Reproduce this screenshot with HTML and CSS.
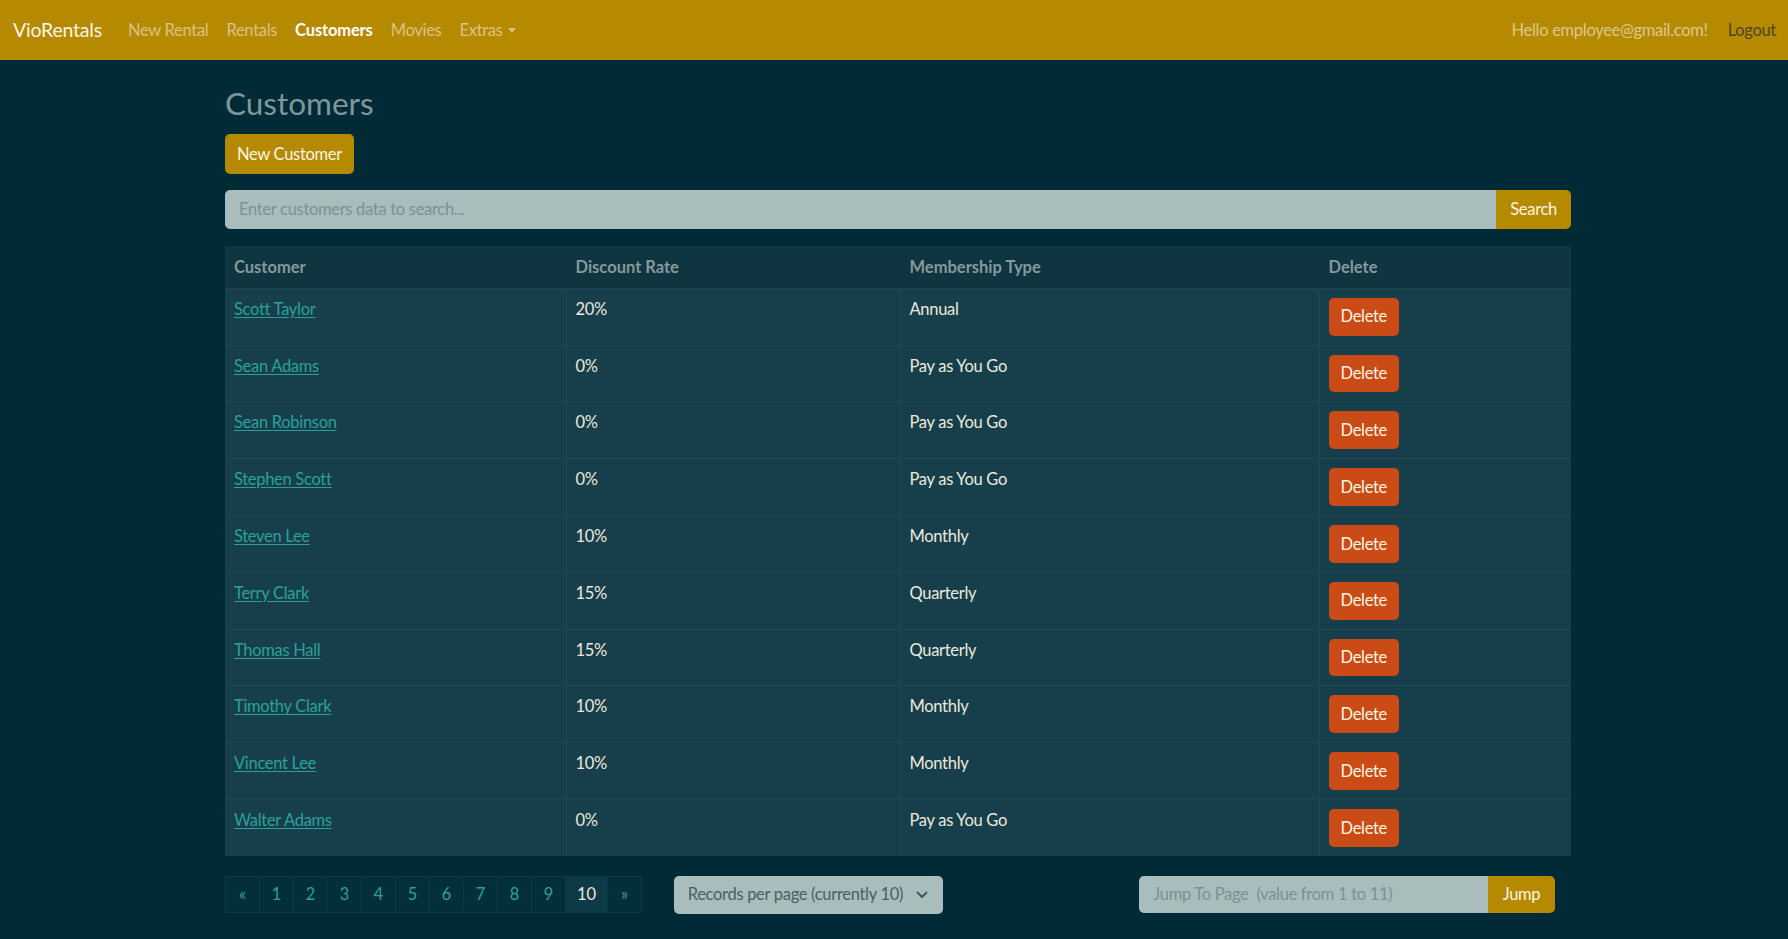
FILE: index.html
```html
<!DOCTYPE html>
<html lang="en">
<head>
<meta charset="utf-8">
<title>Customers - VioRentals</title>
<link rel="stylesheet" href="styles.css">
</head>
<body>
<nav class="navbar">
  <a class="brand" href="#">VioRentals</a>
  <ul class="nav">
    <li><a class="nav-link" href="#">New Rental</a></li>
    <li><a class="nav-link" href="#">Rentals</a></li>
    <li><a class="nav-link active" href="#">Customers</a></li>
    <li><a class="nav-link" href="#">Movies</a></li>
    <li><a class="nav-link dropdown" href="#">Extras<span class="caret"></span></a></li>
  </ul>
  <div class="nav-right">
    <span class="hello">Hello employee@gmail.com!</span>
    <a class="logout" href="#">Logout</a>
  </div>
</nav>

<main class="container">
  <h2 class="page-title">Customers</h2>
  <button class="btn btn-primary btn-new">New Customer</button>

  <form class="input-group search-group">
    <input class="form-input" type="text" placeholder="Enter customers data to search...">
    <button class="btn btn-primary btn-addon" type="button">Search</button>
  </form>

  <table class="table">
    <colgroup>
      <col class="col-customer">
      <col class="col-discount">
      <col class="col-membership">
      <col class="col-delete">
    </colgroup>
    <thead>
      <tr><th>Customer</th><th>Discount Rate</th><th>Membership Type</th><th>Delete</th></tr>
    </thead>
    <tbody>
      <tr><td><a href="#">Scott Taylor</a></td><td>20%</td><td>Annual</td><td><button class="btn btn-delete">Delete</button></td></tr>
      <tr><td><a href="#">Sean Adams</a></td><td>0%</td><td>Pay as You Go</td><td><button class="btn btn-delete">Delete</button></td></tr>
      <tr><td><a href="#">Sean Robinson</a></td><td>0%</td><td>Pay as You Go</td><td><button class="btn btn-delete">Delete</button></td></tr>
      <tr><td><a href="#">Stephen Scott</a></td><td>0%</td><td>Pay as You Go</td><td><button class="btn btn-delete">Delete</button></td></tr>
      <tr><td><a href="#">Steven Lee</a></td><td>10%</td><td>Monthly</td><td><button class="btn btn-delete">Delete</button></td></tr>
      <tr><td><a href="#">Terry Clark</a></td><td>15%</td><td>Quarterly</td><td><button class="btn btn-delete">Delete</button></td></tr>
      <tr><td><a href="#">Thomas Hall</a></td><td>15%</td><td>Quarterly</td><td><button class="btn btn-delete">Delete</button></td></tr>
      <tr><td><a href="#">Timothy Clark</a></td><td>10%</td><td>Monthly</td><td><button class="btn btn-delete">Delete</button></td></tr>
      <tr><td><a href="#">Vincent Lee</a></td><td>10%</td><td>Monthly</td><td><button class="btn btn-delete">Delete</button></td></tr>
      <tr><td><a href="#">Walter Adams</a></td><td>0%</td><td>Pay as You Go</td><td><button class="btn btn-delete">Delete</button></td></tr>
    </tbody>
  </table>

  <div class="footer-row">
    <ul class="pagination">
      <li><a class="page-link" href="#">&laquo;</a></li>
      <li><a class="page-link" href="#">1</a></li>
      <li><a class="page-link" href="#">2</a></li>
      <li><a class="page-link" href="#">3</a></li>
      <li><a class="page-link" href="#">4</a></li>
      <li><a class="page-link" href="#">5</a></li>
      <li><a class="page-link" href="#">6</a></li>
      <li><a class="page-link" href="#">7</a></li>
      <li><a class="page-link" href="#">8</a></li>
      <li><a class="page-link" href="#">9</a></li>
      <li><a class="page-link active" href="#">10</a></li>
      <li><a class="page-link" href="#">&raquo;</a></li>
    </ul>

    <div class="select-wrap">
      <div class="select">
        <span>Records per page (currently 10)</span>
        <svg class="chevron" width="12" height="8" viewBox="0 0 12 8"><path d="M1.5 1.5 L6 6 L10.5 1.5" fill="none" stroke="#3f5558" stroke-width="1.8" stroke-linecap="round" stroke-linejoin="round"/></svg>
      </div>
    </div>

    <form class="input-group jump-group">
      <input class="form-input" type="text" placeholder="Jump To Page  (value from 1 to 11)">
      <button class="btn btn-primary btn-addon btn-jump" type="button">Jump</button>
    </form>
  </div>
</main>
</body>
</html>
```

FILE: styles.css
```css
* { box-sizing: border-box; }

html, body {
  margin: 0;
  padding: 0;
}

body {
  background: #002b36;
  color: #839496;
  font-family: Lato, "Open Sans", "Liberation Sans", sans-serif;
  font-size: 16.5px;
  letter-spacing: -0.3px;
  line-height: 1.5;
  min-height: 939px;
}

a { text-decoration: none; }

/* ---------- navbar ---------- */
.navbar {
  height: 60px;
  background: #b58900;
  display: flex;
  align-items: center;
  padding: 0 12px 0 13px;
}

.brand {
  color: #fdf6e3;
  font-size: 19.5px;
  letter-spacing: -0.2px;
  margin-right: 17px;
  line-height: 1;
}

.nav {
  list-style: none;
  margin: 0;
  padding: 0;
  display: flex;
  align-items: center;
}

.nav-link {
  display: block;
  padding: 0 9px;
  color: rgba(255, 255, 255, 0.5);
}

.nav-link.active {
  color: #ffffff;
  font-weight: 700;
  letter-spacing: -0.15px;
}

.caret {
  display: inline-block;
  margin-left: 5px;
  vertical-align: 3px;
  border-top: 5px solid rgba(255, 255, 255, 0.5);
  border-left: 4.5px solid transparent;
  border-right: 4.5px solid transparent;
}

.nav-right {
  margin-left: auto;
  display: flex;
  align-items: center;
  gap: 20px;
}

.hello { color: rgba(255, 255, 255, 0.55); }

.logout { color: #4d4620; }

/* ---------- container ---------- */
.container {
  width: 1346px;
  margin: 0 auto;
  padding-top: 25px;
  position: relative;
  left: 4px;
}

.page-title {
  margin: 0;
  font-size: 31.5px;
  letter-spacing: 0;
  font-weight: 400;
  line-height: 1.2;
  color: #7f969b;
}

/* ---------- buttons ---------- */
.btn {
  font-family: inherit;
  letter-spacing: inherit;
  border: none;
  border-radius: 5px;
  cursor: pointer;
  color: #fdf6e3;
  font-size: 16.5px;
  line-height: 1;
}

.btn-primary { background: #b58900; }

.btn-new {
  display: block;
  margin-top: 11px;
  height: 40px;
  padding: 0 12px;
}

.btn-delete {
  background: #cb4b16;
  height: 37.8px;
  padding: 0 12px;
}

/* ---------- input groups ---------- */
.input-group {
  display: flex;
  margin: 0;
}

.form-input {
  flex: 1;
  min-width: 0;
  height: 100%;
  background: #a9bdbd;
  border: none;
  border-radius: 5px 0 0 5px;
  padding: 0 14px;
  font-family: inherit;
  letter-spacing: inherit;
  font-size: 16.5px;
  color: #073642;
}

.form-input::placeholder { color: #7e9193; }

.btn-addon {
  border-radius: 0 5px 5px 0;
  padding: 0 14px;
  height: 100%;
}

.search-group {
  margin-top: 16px;
  height: 39px;
}

/* ---------- table ---------- */
.table {
  margin-top: 17px;
  width: 100%;
  border-collapse: collapse;
  color: #ece9dd;
}

.col-customer { width: 341px; }
.col-discount { width: 334px; }
.col-membership { width: 419px; }
.col-delete { width: 252px; }

.table th {
  background: #0e3540;
  color: #86999c;
  font-weight: 700;
  letter-spacing: 0;
  text-align: left;
  padding: 8px 9px;
  line-height: 26px;
  border-left: 1px solid #0e3540;
}

.table td {
  background: #173f4b;
  padding: 9px 9px 9px 9px;
  vertical-align: top;
  line-height: 22px;
  border-top: 1px solid #1d4752;
  border-left: 1px solid #1d4752;
}

.table td:first-child,
.table th:first-child { border-left: none; }

.table td a {
  color: #2aa198;
  text-decoration: underline;
  text-underline-offset: 2px;
}

/* ---------- footer row ---------- */
.footer-row {
  margin-top: 20px;
  display: grid;
  grid-template-columns: repeat(3, 1fr);
  align-items: start;
}

.pagination {
  list-style: none;
  margin: 0;
  padding: 0;
  display: flex;
}

.page-link {
  display: flex;
  align-items: center;
  justify-content: center;
  height: 37px;
  min-width: 35px;
  padding: 0 11px;
  color: #2aa198;
  background: #022f3a;
  border: 1px solid #0a3944;
  margin-left: -1px;
  letter-spacing: 0;
}

.pagination li:first-child .page-link { margin-left: 0; }

.page-link.active {
  background: #0c3b47;
  color: #eae6d8;
}

.select {
  width: 269px;
  height: 38px;
  background: #a9bdbd;
  border-radius: 5px;
  display: flex;
  align-items: center;
  justify-content: space-between;
  padding: 0 15px 0 14px;
  color: #4a6064;
  white-space: nowrap;
}

.jump-group {
  height: 37px;
  margin: 0 16px 0 17px;
}

.btn-jump { width: 67px; padding: 0; }
```
